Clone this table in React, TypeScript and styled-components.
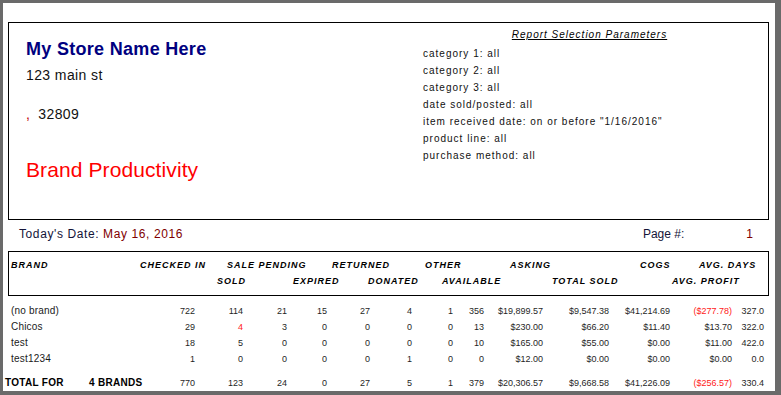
import styled, { createGlobalStyle } from 'styled-components';

const GlobalStyle = createGlobalStyle`
  html, body {
    margin: 0;
    padding: 0;
    background: #6a6a6a;
  }
  body {
    font-family: "Liberation Sans", Arial, sans-serif;
  }
`;

const Page = styled.div`
  width: 772px;
  height: 388px;
  margin: 3px 0 0 3px;
  padding: 19px 0 0 2px;
  box-sizing: border-box;
  background: #fff;
`;

const HeaderBox = styled.div`
  display: flex;
  width: 761px;
  height: 198px;
  margin-left: 3px;
  border: 1px solid #000;
  box-sizing: border-box;
`;

const StoreCol = styled.div`
  flex: 1;
  display: flex;
  flex-direction: column;
  align-items: flex-start;
  padding: 16px 0 0 17px;
`;

const StoreName = styled.div`
  font-size: 18px;
  line-height: 20px;
  font-weight: 700;
  letter-spacing: 0.3px;
  color: #000080;
`;

const AddressLine = styled.div<{ $gap: number }>`
  margin-top: ${(p) => p.$gap}px;
  font-size: 14px;
  line-height: 16px;
  letter-spacing: 0.4px;
  color: #111;
`;

const Comma = styled.span`
  color: #c00000;
  margin-right: 8px;
`;

const ReportName = styled.div`
  margin-top: 36px;
  font-size: 21px;
  line-height: 24px;
  letter-spacing: 0.1px;
  color: #ff0000;
`;

const ParamsCol = styled.div`
  width: 357px;
  padding-top: 6px;
`;

const ParamsTitle = styled.div`
  font-size: 10px;
  line-height: 12px;
  font-style: italic;
  letter-spacing: 1px;
  text-decoration: underline;
  text-align: center;
  color: #000;
`;

const ParamsList = styled.div`
  margin-top: 4px;
  padding-left: 12px;
`;

const Param = styled.div`
  font-size: 10px;
  line-height: 17px;
  letter-spacing: 1px;
  color: #111;
  white-space: nowrap;
`;

const DateRow = styled.div`
  display: flex;
  width: 761px;
  margin: 7px 0 0 3px;
  padding-left: 11px;
  box-sizing: border-box;
  font-size: 12px;
  line-height: 14px;
  letter-spacing: 0.6px;
`;

const Label = styled.span`
  color: #141438;
`;

const Value = styled.span`
  color: #800000;
`;

const PageGroup = styled.div`
  display: flex;
  gap: 62px;
  margin-left: auto;
  padding-right: 16px;
  letter-spacing: 0;
`;

const TableHead = styled.div`
  width: 761px;
  height: 45px;
  margin: 10px 0 0 3px;
  padding: 7px 0 0 2px;
  border: 1px solid #000;
  box-sizing: border-box;
`;

const HeadRow = styled.div<{ $cols: string; $top?: number }>`
  display: grid;
  grid-template-columns: ${(p) => p.$cols};
  margin-top: ${(p) => p.$top ?? 0}px;
  font-size: 9px;
  line-height: 12px;
  font-weight: 700;
  font-style: italic;
  letter-spacing: 1px;
  color: #000;
  white-space: nowrap;
`;

const Rows = styled.div`
  margin-top: 7px;
`;

const NUM_COLS = '34px 48px 44px 40px 43px 42px 41px 31px 59px 66px 61px 62px 32px';

const DataRow = styled.div<{ $total?: boolean }>`
  display: grid;
  grid-template-columns: ${(p) => (p.$total ? '156px' : '150px')} ${NUM_COLS};
  align-items: baseline;
  margin-top: ${(p) => (p.$total ? 8 : 0)}px;
  padding-left: ${(p) => (p.$total ? 0 : 6)}px;
  line-height: 15px;
`;

const Brand = styled.span`
  font-size: 10px;
  letter-spacing: 0.2px;
  color: #1a1a1a;
`;

const TotalLabel = styled.span`
  display: flex;
  font-size: 10px;
  font-weight: 700;
  letter-spacing: 0.3px;
  color: #000;
  white-space: nowrap;
`;

const TotalFor = styled.span`
  width: 84px;
`;

const Num = styled.span<{ $red?: boolean }>`
  font-size: 9px;
  text-align: right;
  color: ${(p) => (p.$red ? '#ff1a1a' : '#1f1f1f')};
  white-space: nowrap;
`;

type Cell = string | { v: string; red: true };

const rows: { brand: string; cells: Cell[] }[] = [
  {
    brand: '(no brand)',
    cells: ['722', '114', '21', '15', '27', '4', '1', '356', '$19,899.57', '$9,547.38', '$41,214.69', { v: '($277.78)', red: true }, '327.0'],
  },
  {
    brand: 'Chicos',
    cells: ['29', { v: '4', red: true }, '3', '0', '0', '0', '0', '13', '$230.00', '$66.20', '$11.40', '$13.70', '322.0'],
  },
  {
    brand: 'test',
    cells: ['18', '5', '0', '0', '0', '0', '0', '10', '$165.00', '$55.00', '$0.00', '$11.00', '422.0'],
  },
  {
    brand: 'test1234',
    cells: ['1', '0', '0', '0', '0', '1', '0', '0', '$12.00', '$0.00', '$0.00', '$0.00', '0.0'],
  },
];

const totals: Cell[] = ['770', '123', '24', '0', '27', '5', '1', '379', '$20,306.57', '$9,668.58', '$41,226.09', { v: '($256.57)', red: true }, '330.4'];

const params = [
  'category 1: all',
  'category 2: all',
  'category 3: all',
  'date sold/posted: all',
  'item received date: on or before "1/16/2016"',
  'product line: all',
  'purchase method: all',
];

function Nums({ cells }: { cells: Cell[] }) {
  return (
    <>
      {cells.map((c, i) =>
        typeof c === 'string' ? (
          <Num key={i}>{c}</Num>
        ) : (
          <Num key={i} $red>
            {c.v}
          </Num>
        ),
      )}
    </>
  );
}

export default function App() {
  return (
    <>
      <GlobalStyle />
      <Page>
        <HeaderBox>
          <StoreCol>
            <StoreName>My Store Name Here</StoreName>
            <AddressLine $gap={8}>123 main st</AddressLine>
            <AddressLine $gap={23}>
              <Comma>,</Comma>32809
            </AddressLine>
            <ReportName>Brand Productivity</ReportName>
          </StoreCol>
          <ParamsCol>
            <ParamsTitle>Report Selection Parameters</ParamsTitle>
            <ParamsList>
              {params.map((p) => (
                <Param key={p}>{p}</Param>
              ))}
            </ParamsList>
          </ParamsCol>
        </HeaderBox>

        <DateRow>
          <Label>Today's Date:&nbsp;</Label>
          <Value>May 16, 2016</Value>
          <PageGroup>
            <Label>Page #:</Label>
            <Value>1</Value>
          </PageGroup>
        </DateRow>

        <TableHead>
          <HeadRow $cols="129px 87px 105px 93px 85px 130px 59px auto">
            <span>BRAND</span>
            <span>CHECKED IN</span>
            <span>SALE PENDING</span>
            <span>RETURNED</span>
            <span>OTHER</span>
            <span>ASKING</span>
            <span>COGS</span>
            <span>AVG. DAYS</span>
          </HeadRow>
          <HeadRow $cols="206px 76px 75px 74px 110px 120px auto" $top={4}>
            <span />
            <span>SOLD</span>
            <span>EXPIRED</span>
            <span>DONATED</span>
            <span>AVAILABLE</span>
            <span>TOTAL SOLD</span>
            <span>AVG. PROFIT</span>
          </HeadRow>
        </TableHead>

        <Rows>
          {rows.map((r) => (
            <DataRow key={r.brand}>
              <Brand>{r.brand}</Brand>
              <Nums cells={r.cells} />
            </DataRow>
          ))}
          <DataRow $total>
            <TotalLabel>
              <TotalFor>TOTAL FOR</TotalFor>
              <span>4 BRANDS</span>
            </TotalLabel>
            <Nums cells={totals} />
          </DataRow>
        </Rows>
      </Page>
    </>
  );
}
